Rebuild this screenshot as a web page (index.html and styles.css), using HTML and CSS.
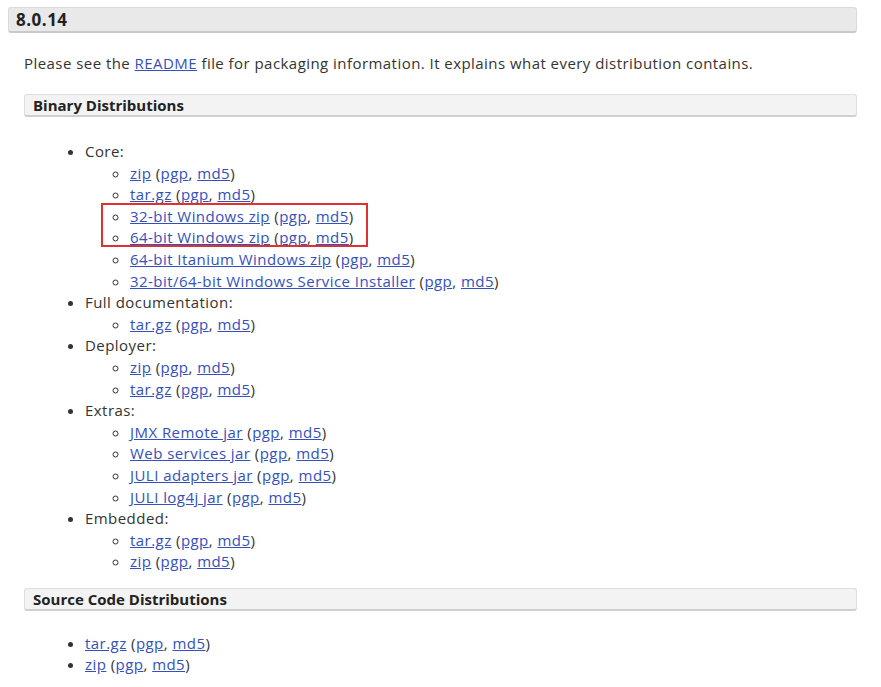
FILE: index.html
```html
<!DOCTYPE html>
<html>
<head>
<meta charset="utf-8">
<link rel="stylesheet" href="styles.css">
</head>
<body>
<div class="page">
  <h3 class="version">8.0.14</h3>
  <div class="content">
    <p class="intro">Please see the <a href="#">README</a> file for packaging information. It explains what every distribution contains.</p>
    <h4 class="section">Binary Distributions</h4>
    <ul class="outer">
      <li>Core:
        <ul class="inner">
          <li><a href="#">zip</a> (<a href="#">pgp</a>, <a href="#">md5</a>)</li>
          <li><a href="#">tar.gz</a> (<a href="#">pgp</a>, <a href="#">md5</a>)</li>
          <li class="marked"><span class="redbox"></span><a href="#">32-bit Windows zip</a> (<a href="#">pgp</a>, <a href="#">md5</a>)</li>
          <li><a href="#">64-bit Windows zip</a> (<a href="#">pgp</a>, <a href="#">md5</a>)</li>
          <li><a href="#">64-bit Itanium Windows zip</a> (<a href="#">pgp</a>, <a href="#">md5</a>)</li>
          <li><a href="#">32-bit/64-bit Windows Service Installer</a> (<a href="#">pgp</a>, <a href="#">md5</a>)</li>
        </ul>
      </li>
      <li>Full documentation:
        <ul class="inner">
          <li><a href="#">tar.gz</a> (<a href="#">pgp</a>, <a href="#">md5</a>)</li>
        </ul>
      </li>
      <li>Deployer:
        <ul class="inner">
          <li><a href="#">zip</a> (<a href="#">pgp</a>, <a href="#">md5</a>)</li>
          <li><a href="#">tar.gz</a> (<a href="#">pgp</a>, <a href="#">md5</a>)</li>
        </ul>
      </li>
      <li>Extras:
        <ul class="inner">
          <li><a href="#">JMX Remote jar</a> (<a href="#">pgp</a>, <a href="#">md5</a>)</li>
          <li><a href="#">Web services jar</a> (<a href="#">pgp</a>, <a href="#">md5</a>)</li>
          <li><a href="#">JULI adapters jar</a> (<a href="#">pgp</a>, <a href="#">md5</a>)</li>
          <li><a href="#">JULI log4j jar</a> (<a href="#">pgp</a>, <a href="#">md5</a>)</li>
        </ul>
      </li>
      <li>Embedded:
        <ul class="inner">
          <li><a href="#">tar.gz</a> (<a href="#">pgp</a>, <a href="#">md5</a>)</li>
          <li><a href="#">zip</a> (<a href="#">pgp</a>, <a href="#">md5</a>)</li>
        </ul>
      </li>
    </ul>
    <h4 class="section section-src">Source Code Distributions</h4>
    <ul class="outer outer-src">
      <li><a href="#">tar.gz</a> (<a href="#">pgp</a>, <a href="#">md5</a>)</li>
      <li><a href="#">zip</a> (<a href="#">pgp</a>, <a href="#">md5</a>)</li>
    </ul>
  </div>
</div>
</body>
</html>
```

FILE: styles.css
```css
html, body {
  margin: 0;
  padding: 0;
  background: #fff;
}
body {
  font-family: "Open Sans", "Liberation Sans", sans-serif;
  font-size: 15px;
  letter-spacing: 0.45px;
  color: #333;
}
.page {
  padding: 7px 24px 0 8px;
}
.version {
  margin: 0;
  padding: 2px 7px 1px;
  height: 20px;
  line-height: 20px;
  font-size: 17px;
  letter-spacing: 0.5px;
  font-weight: bold;
  color: #222;
  background: #e9e9e9;
  border: 1px solid #dadada;
  border-bottom: 2px solid #c9c9c9;
  border-radius: 3px;
}
.content {
  padding-left: 16px;
}
.intro {
  margin: 0;
  padding-top: 20px;
  line-height: 21px;
}
a {
  color: #3450bf;
  text-decoration: underline;
}
.section {
  margin: 20px 0 0;
  padding: 0 8px;
  height: 20px;
  line-height: 20px;
  font-size: 15px;
  letter-spacing: 0;
  font-weight: bold;
  color: #222;
  background: #f3f3f3;
  border: 1px solid #dedede;
  border-bottom: 2px solid #cfcfcf;
  border-radius: 3px;
}
.section-src {
  margin-top: 15px;
}
.outer {
  margin: 24px 0 0;
  padding-left: 61px;
  list-style: disc;
  line-height: 21.6px;
}
.outer-src {
  margin-top: 22px;
}
.inner {
  margin: 0;
  padding-left: 45px;
  list-style: circle;
}
.marked {
  position: relative;
}
.redbox {
  position: absolute;
  left: -29px;
  top: -3px;
  width: 267px;
  height: 44px;
  box-sizing: border-box;
  border: 2px solid #e0312e;
  pointer-events: none;
}
```
